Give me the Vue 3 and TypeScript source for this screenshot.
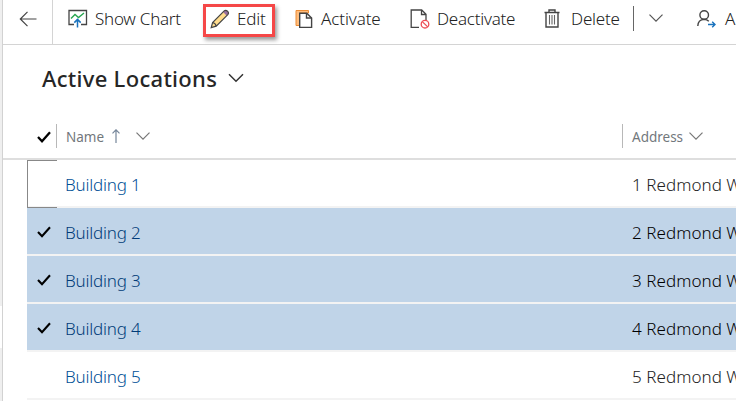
<script setup lang="ts">
interface Location {
  id: number
  name: string
  address: string
  selected: boolean
}

const locations: Location[] = [1, 2, 3, 4, 5].map((n) => ({
  id: n,
  name: `Building ${n}`,
  address: `${n} Redmond W`,
  selected: n >= 2 && n <= 4,
}))
</script>

<template>
  <div class="screen">
    <aside class="rail"><div class="rail-active"></div></aside>
    <main class="page">
      <nav class="toolbar">
        <button class="back" aria-label="Back">
          <svg width="18" height="16" viewBox="0 0 18 16"><path d="M8.5 .8L1.3 8l7.2 7.2M1.3 8H17.5" /></svg>
        </button>
        <button class="cmd chart">
          <svg width="20" height="19" viewBox="0 0 20 19">
            <path d="M6 15.5H1V1.5h17.5v14H13" stroke-width="1.3" />
            <path d="M3 9.5l4-4 3.5 3L16 4" stroke="#27a550" stroke-width="1.4" />
            <path d="M9.5 18.5v-8M6.3 13.6l3.2-3.2 3.2 3.2" stroke="#1972bd" stroke-width="1.5" />
          </svg>
          <span>Show Chart</span>
        </button>
        <button class="cmd edit">
          <svg width="21" height="20" viewBox="0 0 21 20">
            <path d="M1.2 18.6l1.4-5.1L14.2 1.9q1.5-1.4 3.3.3 1.8 1.8.3 3.4L6.2 17.2z" fill="#ffdc8c" stroke="none" />
            <path d="M13.1 3l1.1-1.1q1.5-1.4 3.3.3 1.8 1.8.3 3.4l-1.1 1.1z" fill="#986f9e" stroke="none" />
            <path d="M1.2 18.6l1.4-5.1L14.2 1.9q1.5-1.4 3.3.3 1.8 1.8.3 3.4L6.2 17.2zM2.6 13.5q2.8.5 3.6 3.7" />
          </svg>
          <span>Edit</span>
        </button>
        <button class="cmd activate">
          <svg width="18" height="20" viewBox="0 0 18 20">
            <path d="M1 16.5V1.5h12.5V4H4.5v12.5z" fill="#ffbd7d" stroke="#ec8c35" stroke-width="1" />
            <path d="M4.7 4.2h7.1l4.8 4.8v9.4H4.7z" fill="#fff" stroke-width="1.4" />
            <path d="M11.5 4.2V9h5" stroke-width="1.4" />
          </svg>
          <span>Activate</span>
        </button>
        <button class="cmd deactivate">
          <svg width="20" height="20" viewBox="0 0 20 20">
            <path d="M9 18.3H1.2V1h10.5L16 5.3V11M11.5 1v4.5H16" stroke-width="1.3" />
            <g stroke="#ed4d55" stroke-width="1.3"><circle cx="15" cy="15.2" r="3.8" /><path d="M12.3 12.6l5.4 5.3" /></g>
          </svg>
          <span>Deactivate</span>
        </button>
        <button class="cmd delete">
          <svg width="16" height="19" viewBox="0 0 16 19">
            <path d="M.5 3.5h15M5 3.3V1h6v2.3M2 3.5V18h12V3.5" stroke-width="1.4" />
            <path d="M5.5 6v9.5M8 6v9.5M10.5 6v9.5" stroke="#666" stroke-width="1.1" />
          </svg>
          <span>Delete</span>
        </button>
        <i class="split"></i>
        <svg class="more" width="14" height="8" viewBox="0 0 14 8"><path d="M.5.6L7 7.1 13.5.6" stroke="#555" /></svg>
        <button class="cmd assign">
          <svg width="19" height="18" viewBox="0 0 19 18">
            <circle cx="7.2" cy="5" r="4.3" stroke-width="1.4" />
            <path d="M.8 16q.2-6.3 6.4-6.6 2.8.1 4.6 1.9" stroke-width="1.4" />
            <path d="M11 14.5h7M15.2 11.7l2.8 2.8-2.8 2.8" stroke="#1972bd" stroke-width="1.4" />
          </svg>
          <span>A</span>
        </button>
      </nav>

      <header class="view">
        <h1>Active Locations</h1>
        <svg width="16" height="10" viewBox="0 0 16 10"><path d="M1 1.2l7 7 7-7" stroke="#333" stroke-width="1.5" /></svg>
      </header>

      <section class="grid">
        <div class="columns">
          <div class="check-cell">
            <svg width="14" height="12" viewBox="0 0 14 12"><path d="M1 6l4 4.2L13 1.2" stroke="#000" stroke-width="2.3" /></svg>
          </div>
          <div class="column name-column">
            <span class="label-name">Name</span>
            <svg class="sort" width="8" height="14" viewBox="0 0 8 14"><path d="M4 14V1M.5 4.3L4 .8l3.5 3.5" stroke="#76869a" /></svg>
            <svg width="14" height="8" viewBox="0 0 14 8"><path d="M.5.6L7 7.1 13.5.6" stroke="#777" /></svg>
          </div>
          <div class="column address-column">
            <span class="label-address">Address</span>
            <svg width="14" height="8" viewBox="0 0 14 8"><path d="M.5.6L7 7.1 13.5.6" stroke="#777" /></svg>
          </div>
        </div>
        <div v-for="loc in locations" :key="loc.id" class="row" :class="{ selected: loc.selected }">
          <div class="check-cell" :class="{ focused: loc.id === 1 }">
            <svg v-if="loc.selected" width="14" height="12" viewBox="0 0 14 12"><path d="M1 6l4 4.2L13 1.2" stroke="#000" stroke-width="2.1" /></svg>
          </div>
          <a class="name">{{ loc.name }}</a>
          <span class="address">{{ loc.address }}</span>
        </div>
      </section>
    </main>
  </div>
</template>

<style>
body {
  margin: 0;
  overflow: hidden;
}
</style>

<style scoped>
* {
  box-sizing: border-box;
}
.screen {
  display: flex;
  width: 736px;
  height: 401px;
  overflow: hidden;
  background: #fff;
  color: #222;
  font-family: "Noto Sans", "Open Sans", sans-serif;
  font-size: 17px;
  font-weight: 300;
  white-space: nowrap;
}
svg {
  display: block;
  flex: none;
  fill: none;
  stroke: #444;
  stroke-width: 1.2;
}
.rail {
  flex: none;
  width: 3px;
  padding-top: 306px;
  background: #efefef;
  border-right: 1px solid #d2d2d2;
}
.rail-active {
  height: 42px;
  background: #fff;
}
.page {
  flex: none;
  width: 733px;
  overflow: hidden;
}
.toolbar {
  display: flex;
  align-items: center;
  height: 45px;
  padding-bottom: 7px;
  border-bottom: 1px solid #d4d4d4;
}
button {
  flex: none;
  padding: 0;
  border: 0;
  background: none;
  color: inherit;
  font: inherit;
}
.back {
  display: flex;
  align-items: center;
  align-self: flex-start;
  width: 50px;
  height: 44px;
  padding: 0 0 7px 16px;
  border-right: 1px solid #d4d4d4;
}
.cmd {
  display: flex;
  align-items: center;
  height: 38px;
}
.chart {
  width: 150px;
  padding-left: 15px;
  gap: 7px;
  letter-spacing: -0.25px;
}
.edit {
  width: 72px;
  height: 33px;
  margin-top: 3px;
  padding: 0 0 3px 4px;
  gap: 6px;
  border: 3px solid #f54747;
  box-shadow: 2px 3px 4px rgba(0, 0, 0, 0.4);
  letter-spacing: -0.2px;
}
.activate {
  width: 135px;
  padding-left: 20px;
  gap: 8px;
  letter-spacing: -0.1px;
}
.deactivate {
  width: 134px;
  gap: 7px;
  letter-spacing: -0.25px;
}
.delete {
  width: 89px;
  gap: 11px;
  letter-spacing: -0.2px;
}
.split {
  flex: none;
  width: 1px;
  height: 25px;
  margin-top: -1px;
  background: #666;
}
.more {
  margin: -1px 34px 0 15px;
}
.assign {
  gap: 9px;
}
.view {
  display: flex;
  align-items: center;
  height: 69px;
  padding: 0 0 4px 39px;
  gap: 9px;
}
h1 {
  margin: 0;
  width: 177px;
  font-size: 22px;
  font-weight: 500;
  line-height: 30px;
  letter-spacing: 0.3px;
  color: #262626;
}
.grid {
  padding-left: 24px;
}
.columns {
  display: flex;
  align-items: center;
  height: 46px;
  margin-left: -24px;
  padding-left: 24px;
  border-bottom: 2px solid #dedede;
  color: #72777c;
  font-size: 13.5px;
  font-weight: 400;
}
.check-cell {
  display: flex;
  align-items: center;
  flex: none;
  width: 30px;
  height: 100%;
  padding: 2px 0 0 10px;
}
.column {
  display: flex;
  align-items: center;
  flex: none;
  height: 24px;
  padding: 1px 0 0 9px;
  border-left: 1px solid #b8b8b8;
}
.columns .check-cell {
  width: 29px;
}
.name-column {
  width: 566px;
}
.label-name {
  width: 38px;
}
.label-address {
  width: 57px;
}
.column > svg {
  margin-top: -1px;
}
.column > .sort {
  margin: -2px 16px 0 8px;
}
.row {
  display: flex;
  align-items: center;
  height: 48px;
  border-bottom: 2px solid #f3f3f3;
}
.row.selected {
  background: #c0d4e8;
  color: #000;
}
.focused {
  height: 48px;
  margin-bottom: -2px;
  border: 1px solid #888;
  border-right: 0;
}
.name {
  flex: none;
  width: 575px;
  padding: 2px 0 0 8px;
  color: #004f96;
  letter-spacing: -0.2px;
}
.selected .name {
  color: #003b78;
}
.address {
  flex: none;
  padding-top: 2px;
  letter-spacing: 0.05px;
}
</style>
